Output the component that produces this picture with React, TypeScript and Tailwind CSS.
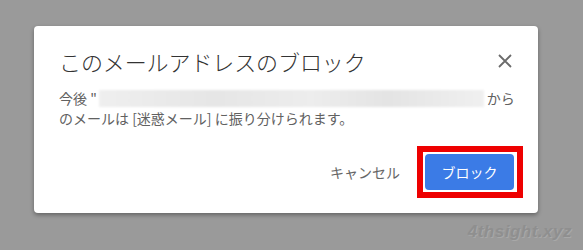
import React from "react";

export default function App() {
  return (
    <div
      className="relative w-[583px] h-[250px] bg-[#9a9a9a] overflow-hidden pt-[26px] pl-[34px]"
      style={{ fontFamily: '"Noto Sans CJK JP", "Noto Sans", sans-serif' }}
    >
      <div className="w-[504px] h-[187px] bg-white rounded-[4px] shadow-[0_2px_4px_rgba(0,0,0,0.35)] pl-[25px] pr-[24px] pt-[21px]">
        <div className="flex items-center justify-between pr-[2px]">
          <h1 className="text-[22px] leading-[28px] text-[#333333] font-light tracking-[-0.1px] whitespace-nowrap">
            このメールアドレスのブロック
          </h1>
          <svg width="16" height="16" viewBox="0 0 16 16" className="mr-[-1px] shrink-0">
            <path d="M2 2 L14 14 M14 2 L2 14" stroke="#6b6b6b" strokeWidth="1.8" fill="none" />
          </svg>
        </div>
        <div className="mt-[13px] text-[14px] leading-[20px] text-[#616161] pr-[2px] whitespace-nowrap">
          <div className="flex items-center">
            <span className="shrink-0">今後 "</span>
            <span className="inline-block shrink-0 w-[385px] h-[17px] ml-[2px] mr-[3px] bg-[linear-gradient(90deg,#efefef,#e6e6e6_30%,#ededed_55%,#e4e4e4_75%,#f0f0f0)] blur-[1px]" />
            <span className="shrink-0">から</span>
          </div>
          <div>のメールは [迷惑メール] に振り分けられます。</div>
        </div>
        <div className="mt-[26px] flex items-center justify-end gap-[25px]">
          <span className="text-[14px] text-[#666666] whitespace-nowrap">キャンセル</span>
          <div className="relative">
            <button className="block w-[89px] h-[36px] rounded-[4px] bg-[#3b7be6] text-white text-[14px] font-normal">
              ブロック
            </button>
            <span className="pointer-events-none absolute -top-[8px] -bottom-[8px] -left-[8px] -right-[9px] border-[6px] border-[#ee0000]" />
          </div>
        </div>
      </div>
      <div className="absolute right-[11px] bottom-[6px] text-[17px] font-bold italic text-[#8f8f8f] [text-shadow:1px_1px_0_#a8a8a8] tracking-[0.5px]" style={{ fontFamily: '"Liberation Sans", sans-serif' }}>
        4thsight.xyz
      </div>
    </div>
  );
}
